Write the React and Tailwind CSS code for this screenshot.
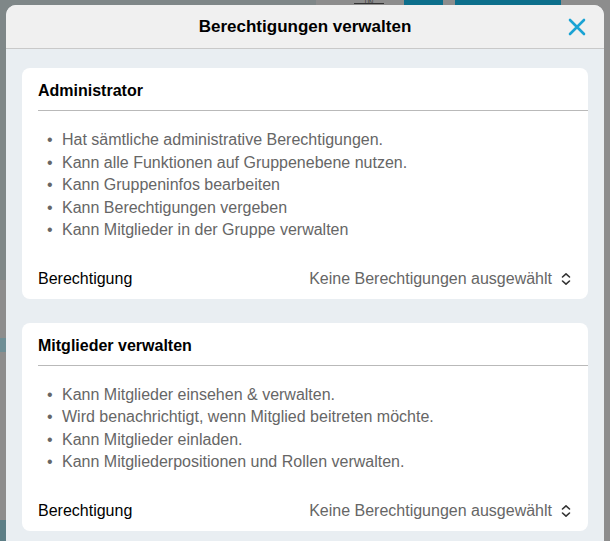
import React from "react";

const cards = [
  {
    title: "Administrator",
    items: [
      "Hat sämtliche administrative Berechtigungen.",
      "Kann alle Funktionen auf Gruppenebene nutzen.",
      "Kann Gruppeninfos bearbeiten",
      "Kann Berechtigungen vergeben",
      "Kann Mitglieder in der Gruppe verwalten",
    ],
  },
  {
    title: "Mitglieder verwalten",
    items: [
      "Kann Mitglieder einsehen & verwalten.",
      "Wird benachrichtigt, wenn Mitglied beitreten möchte.",
      "Kann Mitglieder einladen.",
      "Kann Mitgliederpositionen und Rollen verwalten.",
    ],
  },
];

function UpDown() {
  return (
    <svg width="12" height="14" viewBox="0 0 12 14" fill="none" stroke="#333" strokeWidth="1.6" strokeLinecap="round" strokeLinejoin="round">
      <path d="M2.5 5 L6 1.8 L9.5 5" />
      <path d="M2.5 9 L6 12.2 L9.5 9" />
    </svg>
  );
}

function Card({ title, items }) {
  return (
    <div className="bg-white rounded-lg pl-4 pb-[8px]">
      <div className="h-[43px] flex items-center border-b border-[#b9b9b9] pt-1">
        <h3 className="text-[16px] font-bold text-black">{title}</h3>
      </div>
      <ul className="pt-[18px] pl-[9px] text-[16px] leading-[22.5px] text-[#666]">
        {items.map((t) => (
          <li key={t} className="flex">
            <span className="w-[15px] shrink-0">•</span>
            <span>{t}</span>
          </li>
        ))}
      </ul>
      <div className="flex items-center justify-between pr-4 mt-[25px] h-[24px]">
        <span className="text-[16px] text-black">Berechtigung</span>
        <span className="flex items-center gap-[8px] text-[16px] text-[#666]">
          Keine Berechtigungen ausgewählt
          <UpDown />
        </span>
      </div>
    </div>
  );
}

export default function App() {
  return (
    <div
      className="relative w-[610px] h-[541px] overflow-hidden bg-[#8d8d8d]"
      style={{ fontFamily: '"Liberation Sans", Arial, sans-serif' }}
    >
      {/* dimmed page behind the dialog */}
      <div className="absolute left-0 top-0 w-[316px] h-[280px] bg-[#7f8788]" />
      <div className="absolute left-[354px] top-0 w-[30px] h-[4px] border-b border-[#333] text-[6px] text-[#333] leading-[4px] text-center">UN</div>
      <div className="absolute left-[404px] top-0 w-[39px] h-[6px] bg-[#0d6f8c]" />
      <div className="absolute left-[455px] top-0 w-[106px] h-[6px] bg-[#0d6f8c]" />
      <div className="absolute left-0 top-[338px] w-[6px] h-[14px] bg-[#6e8e96]" />
      <div className="absolute left-0 top-[520px] w-[6px] h-[21px] bg-[#5d7e86]" />

      <div className="absolute left-[6px] top-[5px] w-[598px] h-[560px] rounded-t-[10px] overflow-hidden bg-[#e9eef2]">
        <div className="relative h-[44px] bg-[#f0f0f0] border-b border-[#c9c9c9] flex items-center justify-center">
          <h2 className="text-[17px] font-bold text-black pt-[1px]">Berechtigungen verwalten</h2>
          <button className="absolute right-[18px] top-[13px]">
            <svg width="18" height="18" viewBox="0 0 18 18" stroke="#1aa3d4" strokeWidth="2.6" strokeLinecap="round">
              <path d="M2 2 L16 16 M16 2 L2 16" />
            </svg>
          </button>
        </div>
        <div className="px-4 pt-[19px] flex flex-col gap-[24px]">
          {cards.map((c) => (
            <Card key={c.title} {...c} />
          ))}
        </div>
      </div>
    </div>
  );
}
